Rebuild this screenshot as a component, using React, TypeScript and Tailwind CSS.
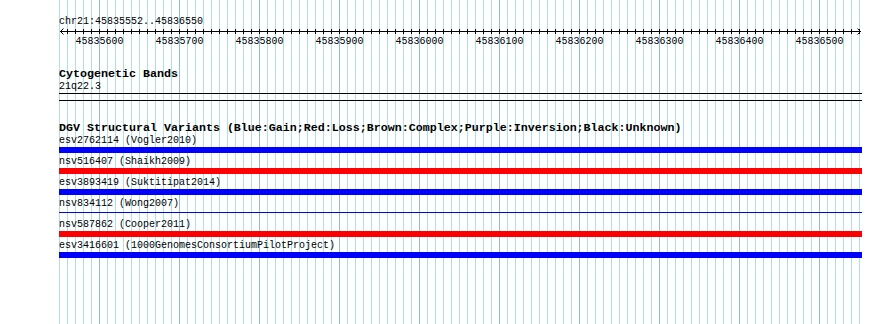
import React from "react";

const START = 45835552;
const END = 45836550;

// grid lines every 10bp (8px), darker every 100bp
const gridLines = Array.from({ length: 101 }, (_, k) => ({
  x: 59 + k * 8,
  major: k % 10 === 5,
}));

const rulerLabels = Array.from({ length: 10 }, (_, i) => ({
  text: String(45835600 + i * 100),
  x: 40 + i * 80 + 0.5,
}));

interface Variant {
  id: string;
  study: string;
  color: "blue" | "red";
  thin?: boolean;
}

const variants: Variant[] = [
  { id: "esv2762114", study: "Vogler2010", color: "blue" },
  { id: "nsv516407", study: "Shaikh2009", color: "red" },
  { id: "esv3893419", study: "Suktitipat2014", color: "blue" },
  { id: "nsv834112", study: "Wong2007", color: "blue", thin: true },
  { id: "nsv587862", study: "Cooper2011", color: "red" },
  { id: "esv3416601", study: "1000GenomesConsortiumPilotProject", color: "blue" },
];

const Grid: React.FC = () => (
  <svg className="absolute inset-0" width={890} height={324} shapeRendering="crispEdges">
    {gridLines.map((g, i) => (
      <rect
        key={i}
        x={g.x}
        y={0}
        width={1}
        height={324}
        fill={g.major ? "#8cbde6" : "#a9e2e8"}
      />
    ))}
  </svg>
);

const Ruler: React.FC = () => (
  <svg width={803} height={20} className="block">
    <line x1={1} x2={802} y1={4.5} y2={4.5} stroke="#000" />
    {Array.from({ length: 100 }, (_, k) => (
      <line
        key={k}
        x1={k * 8 + 8.5}
        x2={k * 8 + 8.5}
        y1={2}
        y2={7}
        stroke="#000"
      />
    ))}
    <polyline points="4.5,1.5 1.5,4.5 4.5,7.5" fill="none" stroke="#000" />
    <polyline points="798.5,1.5 801.5,4.5 798.5,7.5" fill="none" stroke="#000" />
    {rulerLabels.map((l) => (
      <text
        key={l.text}
        x={l.x}
        y={16.5}
        textAnchor="middle"
        fontSize={10}
        fontFamily="'Liberation Mono', monospace"
        fill="#000"
      >
        {l.text}
      </text>
    ))}
  </svg>
);

const VariantRow: React.FC<{ v: Variant }> = ({ v }) => (
  <div className="pb-[3px]">
    <div className="text-[10px] leading-[12px] whitespace-pre">
      {v.id} ({v.study})
    </div>
    {v.thin ? (
      <div className="h-[6px] pt-[2px]">
        <div className="h-px bg-[#0000ff]" />
      </div>
    ) : (
      <div
        className={
          v.color === "blue" ? "h-[6px] bg-[#0000ff]" : "h-[6px] bg-[#ff0000]"
        }
      />
    )}
  </div>
);

export default function App() {
  return (
    <div className="relative w-[890px] h-[324px] bg-white overflow-hidden text-black font-['Liberation_Mono',monospace]">
      <Grid />
      <div className="relative ml-[59px] w-[803px] pt-[16px]">
        <div className="text-[10px] leading-[11px]">
          chr{21}:{START}..{END}
        </div>
        <Ruler />

        <div className="mt-[21px] text-[11.67px] leading-[13px] font-bold">
          Cytogenetic Bands
        </div>
        <div className="text-[10px] leading-[11px]">21q22.3</div>
        <div className="mt-px h-[8px] border-y border-black" />

        <div className="mt-[21px] text-[11.67px] leading-[13px] font-bold whitespace-pre">
          DGV Structural Variants (Blue:Gain;Red:Loss;Brown:Complex;Purple:Inversion;Black:Unknown)
        </div>
        <div className="flex flex-col">
          {variants.map((v) => (
            <VariantRow key={v.id} v={v} />
          ))}
        </div>
      </div>
    </div>
  );
}
